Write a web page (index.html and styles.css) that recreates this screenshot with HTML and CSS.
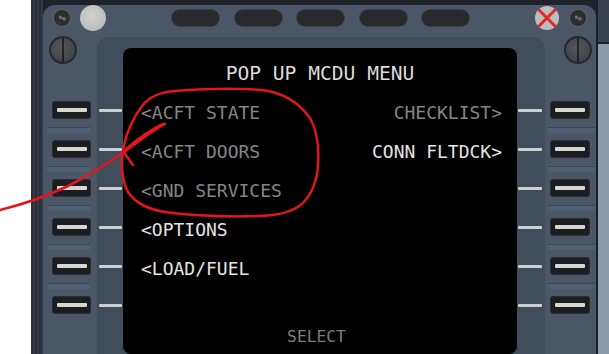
FILE: index.html
```html
<!DOCTYPE html>
<html>
<head>
<meta charset="utf-8">
<link rel="stylesheet" href="styles.css">
</head>
<body>
<div class="page">
  <div class="white"></div>
  <div class="strip"></div>
  <div class="panel-col">
    <div class="panel">
      <div class="topbar">
        <span class="screw screw-l"></span>
        <span class="light"></span>
        <span class="oval oval-first"></span>
        <span class="oval"></span>
        <span class="oval"></span>
        <span class="oval"></span>
        <span class="oval"></span>
        <span class="xbtn">
          <svg width="24" height="24" viewBox="0 0 24 24"><path d="M4 4 L20 20 M20 4 L4 20" stroke="#e0262b" stroke-width="3" stroke-linecap="round" fill="none"/></svg>
        </span>
        <span class="screw screw-r"></span>
      </div>
      <div class="main">
        <div class="lsk lsk-left">
          <div class="knob"></div>
          <div class="key"><span></span></div><div class="band"></div>
          <div class="key"><span></span></div><div class="band"></div>
          <div class="key"><span></span></div><div class="band"></div>
          <div class="key"><span></span></div><div class="band"></div>
          <div class="key"><span></span></div><div class="band"></div>
          <div class="key"><span></span></div>
        </div>
        <div class="recess">
          <div class="gutter gl"><i></i><i></i><i></i><i></i><i></i><i></i></div>
          <div class="screen">
            <div class="title">POP UP MCDU MENU</div>
            <div class="row"><span class="dim">&lt;ACFT STATE</span><span class="dim">CHECKLIST&gt;</span></div>
            <div class="row"><span class="dim">&lt;ACFT DOORS</span><span>CONN FLTDCK&gt;</span></div>
            <div class="row"><span class="dim">&lt;GND SERVICES</span></div>
            <div class="row"><span>&lt;OPTIONS</span></div>
            <div class="row"><span>&lt;LOAD/FUEL</span></div>
            <div class="row"></div>
            <div class="select">SELECT</div>
          </div>
          <div class="gutter gr"><i></i><i></i><i></i><i></i><i></i><i></i></div>
        </div>
        <div class="lsk lsk-right">
          <div class="knob"></div>
          <div class="key"><span></span></div><div class="band"></div>
          <div class="key"><span></span></div><div class="band"></div>
          <div class="key"><span></span></div><div class="band"></div>
          <div class="key"><span></span></div><div class="band"></div>
          <div class="key"><span></span></div><div class="band"></div>
          <div class="key"><span></span></div>
        </div>
      </div>
    </div>
  </div>
  <div class="edge"></div>
  <svg class="annot" width="609" height="354" viewBox="0 0 609 354">
    <g fill="none" stroke="#e3161d" stroke-width="2.5" stroke-linecap="round" stroke-linejoin="round">
      <path d="M142 106 C150 96 160 92 175 91 C200 89 235 88 262 90 C285 93 300 104 310 118 C318 132 319 150 318 165 C317 182 311 195 302 204 C292 212 280 215 260 216 C230 217 195 216 165 212 C145 209 131 200 126 188 C121 175 121 158 124 145 C127 132 133 118 142 106"/>
      <path d="M0 210 C20 205 45 197 68 186 C90 175 108 163 124 152 C138 142 150 132 165 124"/>
      <path d="M163 124 C150 130 138 139 126 149"/>
      <path d="M123 151 L133 165"/>
    </g>
  </svg>
</div>
</body>
</html>
```

FILE: styles.css
```css
html, body {
  margin: 0;
  padding: 0;
}
body {
  width: 609px;
  height: 354px;
  overflow: hidden;
  background: #ffffff;
}
.page {
  position: relative;
  display: flex;
  width: 609px;
  height: 354px;
}
.white {
  width: 31px;
  background: #ffffff;
}
.strip {
  width: 12px;
  background: repeating-linear-gradient(90deg, #292e36 0 2px, #353b45 2px 4px);
}
.panel-col {
  width: 553px;
  padding-top: 5px;
  box-sizing: border-box;
  background: #1f2329;
}
.panel {
  height: 349px;
  background: #4b5666;
  border-radius: 12px 12px 0 0;
  display: flex;
  flex-direction: column;
}
.topbar {
  height: 32px;
  box-sizing: border-box;
  padding-bottom: 7px;
  display: flex;
  align-items: center;
}
.screw {
  width: 20px;
  height: 20px;
  box-sizing: border-box;
  border-radius: 50%;
  border: 2px solid #585c61;
  background:
    radial-gradient(circle at 40% 45%, #6a6d70 0 1.5px, transparent 2px),
    radial-gradient(circle at 62% 55%, #6a6d70 0 1.5px, transparent 2px),
    #2c2e31;
  flex: none;
}
.screw-l { margin-left: 9px; }
.screw-r { margin-left: 9px; }
.light {
  width: 26px;
  height: 26px;
  border-radius: 50%;
  margin-left: 8px;
  background: radial-gradient(circle at 45% 40%, #d2d2d0, #b3b4b4);
  flex: none;
}
.oval {
  width: 47px;
  height: 16px;
  border-radius: 8px;
  background: #27292c;
  box-shadow: 0 0 0 1px #3a3f46;
  margin-left: 15.5px;
  flex: none;
}
.oval-first { margin-left: 66px; }
.xbtn {
  width: 24px;
  height: 24px;
  border-radius: 50%;
  background: #bcbdbd;
  margin-left: 66px;
  display: flex;
  flex: none;
}
.main {
  flex: 1;
  display: grid;
  grid-template-columns: 54px 448px 51px;
}
.lsk {
  display: flex;
  flex-direction: column;
}
.knob {
  width: 28px;
  height: 28px;
  box-sizing: border-box;
  border-radius: 50%;
  margin-top: -1px;
  margin-bottom: 37px;
  border: 2px solid #26282b;
  background:
    linear-gradient(90deg, transparent 11px, #202225 11px, #202225 13px, transparent 13px),
    radial-gradient(circle at 45% 40%, #55585c, #393c40);
}
.lsk-left .knob { margin-left: 6px; }
.lsk-right .knob { margin-left: 19px; }
.key {
  height: 18px;
  background: #1c1d20;
  border-radius: 4px;
  box-shadow: inset 0 0 0 1px #2b2d31;
  display: flex;
  align-items: center;
  justify-content: center;
}
.key span {
  width: 30px;
  height: 4px;
  border-radius: 1px;
  background: #d6d6d3;
}
.lsk-left .key { margin-left: 9px; width: 39px; }
.lsk-right .key { margin-left: 5px; width: 40px; }
.band {
  height: 6px;
  margin-top: 8px;
  margin-bottom: 7px;
  background: #4d6173;
  box-shadow: inset 0 1px 0 #3a4756;
}
.lsk-left .band { margin-left: 4px; width: 43px; }
.lsk-right .band { margin-left: 3px; width: 47px; }
.recess {
  background: #424d5c;
  border-radius: 12px 12px 0 0;
  padding-top: 11px;
  display: flex;
}
.gutter {
  display: flex;
  flex-direction: column;
  gap: 36px;
  padding-top: 61px;
}
.gl { width: 26px; }
.gr { width: 28px; }
.gutter i {
  display: block;
  height: 3px;
  border-radius: 1px;
  background: #cfd0d0;
}
.gl i { margin-left: 2px; width: 23px; }
.gr i { margin-left: 1px; width: 24px; }
.screen {
  width: 394px;
  box-sizing: border-box;
  background: #000000;
  border-radius: 8px;
  padding: 6px 15px 0 18px;
  font-family: "DejaVu Sans Mono", "Liberation Mono", monospace;
  color: #e4e4e2;
}
.title {
  font-size: 19.6px;
  line-height: 39px;
  height: 39px;
  text-align: center;
  padding-right: 3px;
  color: #dcdcda;
  white-space: pre;
}
.row {
  height: 39px;
  line-height: 39px;
  font-size: 18px;
  display: flex;
  justify-content: space-between;
  white-space: pre;
}
.dim { color: #858585; }
.select {
  font-size: 16.3px;
  line-height: 19px;
  text-align: center;
  padding-right: 10px;
  color: #7e7e7e;
}
.edge {
  width: 13px;
  background:
    linear-gradient(90deg, #1d2026 0 2px, transparent 2px),
    linear-gradient(180deg, #39424e 0 42px, #1e2228 42px 44px, #8b9aad 44px);
}
.annot {
  position: absolute;
  left: 0;
  top: 0;
  pointer-events: none;
}
```
